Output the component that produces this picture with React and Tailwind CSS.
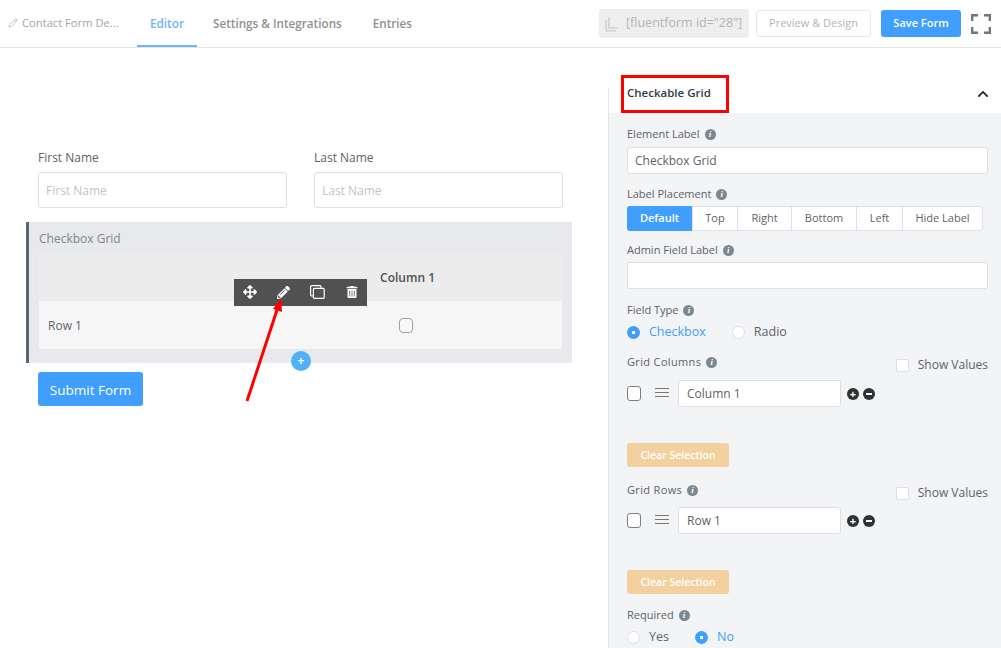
import { FaArrowsAlt, FaChevronUp, FaPencilAlt, FaTrashAlt } from "react-icons/fa"
import { Pencil } from "lucide-react"

const font = "font-['Open_Sans','Noto_Sans',sans-serif]"

function Info() {
  return (
    <span className="ml-[5px] inline-flex h-[11px] w-[11px] items-center justify-center rounded-full bg-[#7d8790] font-['Liberation_Serif',serif] text-[9px] font-bold italic leading-none text-white">
      i
    </span>
  )
}

function FieldLabel({ children, className = "" }) {
  return (
    <div className={`flex h-[18px] items-center text-[11px] text-[#606266] ${className}`}>
      {children}
      <Info />
    </div>
  )
}

function Radio({ label, on }) {
  return (
    <div className={`flex items-center text-[12.5px] ${on ? "font-medium text-[#409eff]" : "text-[#606266]"}`}>
      {on ? (
        <span className="flex h-[13px] w-[13px] items-center justify-center rounded-full bg-[#409eff]">
          <span className="h-[3px] w-[3px] bg-white" />
        </span>
      ) : (
        <span className="h-[13px] w-[13px] rounded-full border border-[#dcdfe6] bg-white" />
      )}
      <span className="ml-[9px]">{label}</span>
    </div>
  )
}

function ShowValues() {
  return (
    <div className="flex items-center text-[12px] text-[#606266]">
      <span className="h-[13px] w-[13px] rounded-[2px] border border-[#dcdfe6] bg-white" />
      <span className="ml-[9px]">Show Values</span>
    </div>
  )
}

function OptionRow({ value, width }) {
  return (
    <div className="flex items-center">
      <span className="h-[15px] w-[14px] rounded-[3px] border border-[#7a7f85] bg-white" />
      <span className="ml-[14px] mb-[3px] flex w-[14px] flex-col gap-[3px]">
        <span className="h-px bg-[#777]" />
        <span className="h-px bg-[#777]" />
        <span className="h-px bg-[#777]" />
      </span>
      <div style={{ width }} className="ml-[9px] flex h-[27px] items-center rounded-[3px] border border-[#dcdfe6] bg-white px-2 pt-px text-[12px] text-[#606266]">
        {value}
      </div>
      <span className="ml-[6px] flex h-[12px] w-[12px] items-center justify-center rounded-full bg-[#303133] text-[11px] font-bold leading-none text-white">+</span>
      <span className="ml-[4px] flex h-[12px] w-[12px] items-center justify-center rounded-full bg-[#303133]">
        <span className="h-[2px] w-[6px] bg-white" />
      </span>
    </div>
  )
}

function ClearButton({ className = "" }) {
  return (
    <div className={`flex h-[24px] w-[102px] items-center justify-center rounded-[3px] bg-[#f3d19e] pt-px text-[10.5px] font-semibold text-white ${className}`}>
      Clear Selection
    </div>
  )
}

const placements = [
  ["Default", "w-[65px]"],
  ["Top", "w-[45px]"],
  ["Right", "w-[54px]"],
  ["Bottom", "w-[65px]"],
  ["Left", "w-[46px]"],
  ["Hide Label", "flex-1"],
]

export default function App() {
  return (
    <div className={`relative h-[648px] w-[1001px] overflow-hidden bg-white ${font}`}>
      <header className="flex h-[48px] items-center border-b border-[#e4e4e4] pl-[8px]">
        <div className="flex w-[129px] items-center text-[11.2px] text-[#a5a5a5]">
          <Pencil className="h-[10px] w-[10px]" strokeWidth={1.5} />
          <span className="ml-[4px]">Contact Form De...</span>
        </div>
        <nav className="flex h-full text-[11.7px] font-semibold text-[#8f8f8f]">
          <span className="flex h-[47px] w-[60px] items-center justify-center border-b-2 border-[#6db3ff] pt-[3px] text-[#6db3ff]">Editor</span>
          <span className="ml-[16px] flex items-center pt-px">Settings &amp; Integrations</span>
          <span className="ml-[31px] flex items-center pt-px">Entries</span>
        </nav>
        <div className="ml-auto flex items-center pr-[10px]">
          <div className="flex h-[29px] w-[150px] items-center rounded-[3px] bg-[#eeeeee] pl-[6px] text-[12.5px] text-[#b4b4b4]">
            <svg width="15" height="16" viewBox="0 0 15 16" fill="none" stroke="#c8c8c8" strokeWidth="1.2">
              <path d="M1 4V15H11" />
              <path d="M4 1V12H13" />
            </svg>
            <span className="ml-[6px] whitespace-nowrap">[fluentform id="28"]</span>
          </div>
          <div className="ml-[7px] flex h-[27px] w-[115px] items-center justify-center rounded-[3px] border border-[#e6e6e6] text-[11px] text-[#b4b4b4]">
            Preview &amp; Design
          </div>
          <div className="ml-[10px] flex h-[27px] w-[80px] items-center justify-center rounded-[3px] bg-[#409eff] text-[11px] font-semibold text-white">
            Save Form
          </div>
          <svg className="ml-[10px]" width="20" height="20" viewBox="0 0 20 20" fill="none" stroke="#6f7780" strokeWidth="2.4">
            <path d="M1.2 7V1.2H7M13 1.2H18.8V7M1.2 13V18.8H7M13 18.8H18.8V13" />
          </svg>
        </div>
      </header>

      <div className="flex h-[600px]">
        <main className="w-[608px] pl-[26px] pr-[36px]">
          <div className="flex gap-[27px] pl-[12px] pr-[9px] pt-[100px]">
            {["First Name", "Last Name"].map((name) => (
              <div key={name} className="flex-1">
                <div className="pt-px text-[12px] leading-[17px] text-[#606266]">{name}</div>
                <div className="mt-[6px] flex h-[36px] items-center rounded-[3px] border border-[#dcdfe6] px-[7px] pt-px text-[12px] text-[#c0c4cc]">
                  {name}
                </div>
              </div>
            ))}
          </div>

          <section className="mt-[14px] h-[141px] border-l-[3px] border-[#5c666e] bg-[#e8e9ec] pl-[10px] pr-[10px] pt-[8px]">
            <div className="text-[12px] leading-[17px] text-[#80858a]">Checkbox Grid</div>
            <div className="mt-[6px] flex h-[48px] items-center justify-end bg-[#ececec] pr-[127px] pt-px text-[12px] font-semibold text-[#4f5358]">
              Column 1
            </div>
            <div className="flex h-[48px] items-center bg-[#f6f6f6] pl-[9px] pt-px text-[12px] text-[#606266]">
              <span>Row 1</span>
              <span className="ml-auto mr-[149px] h-[15px] w-[14px] rounded-[4px] border border-[#9a9fa5] bg-[#f8f8f8]" />
            </div>
          </section>

          <div className="ml-[12px] mt-[9px] flex h-[34px] w-[105px] items-center justify-center rounded-[3px] bg-[#409eff] pt-[2px] text-[13.5px] text-white">
            Submit Form
          </div>
        </main>

        <aside className="mt-[40px] flex-1 border-l border-[#e4e4e4]">
          <div className="flex h-[25px] items-start justify-between pl-[18px] pr-[12px] text-[11.5px] font-semibold leading-[10px] text-[#303a4d]">
            <span>Checkable Grid</span>
            <FaChevronUp className="h-[12px] w-[12px] text-[#2a3440]" />
          </div>
          <div className="h-[535px] bg-[#f3f4f6] pl-[18px] pr-[13px] pt-[12px]">
            <FieldLabel>Element Label</FieldLabel>
            <div className="mt-[4px] flex h-[27px] items-center rounded-[3px] border border-[#dcdfe6] bg-white px-[7px] text-[12px] text-[#606266]">
              Checkbox Grid
            </div>

            <FieldLabel className="mt-[11px]">Label Placement</FieldLabel>
            <div className="mt-[3px] flex h-[25px] w-[356px] rounded-[3px] border border-[#dcdfe6] bg-white text-[11px] text-[#606266]">
              {placements.map(([name, width], i) => (
                <span
                  key={name}
                  className={`flex items-center justify-center ${width} ${
                    i === 0 ? "-my-px -ml-px rounded-l-[3px] bg-[#409eff] font-semibold text-white" : "border-l border-[#dcdfe6]"
                  }`}
                >
                  {name}
                </span>
              ))}
            </div>

            <FieldLabel className="mt-[10px]">Admin Field Label</FieldLabel>
            <div className="mt-[3px] h-[27px] rounded-[3px] border border-[#dcdfe6] bg-white" />

            <FieldLabel className="mt-[12px]">Field Type</FieldLabel>
            <div className="mt-[3px] flex h-[20px] items-center gap-[26px]">
              <Radio label="Checkbox" on />
              <Radio label="Radio" />
            </div>

            <div className="mt-[11px] flex items-start justify-between">
              <FieldLabel className="tracking-[0.35px]">Grid Columns</FieldLabel>
              <div className="pt-[3px]"><ShowValues /></div>
            </div>
            <div className="mt-[6px]"><OptionRow value="Column 1" width={163} /></div>
            <ClearButton className="mt-[36px]" />

            <div className="mt-[14px] flex items-start justify-between">
              <FieldLabel className="tracking-[0.35px]">Grid Rows</FieldLabel>
              <div className="pt-[3px]"><ShowValues /></div>
            </div>
            <div className="mt-[5px]"><OptionRow value="Row 1" width={163} /></div>
            <ClearButton className="mt-[36px]" />

            <FieldLabel className="mt-[12px]">Required</FieldLabel>
            <div className="mt-[3px] flex h-[20px] items-center gap-[26px]">
              <Radio label="Yes" />
              <Radio label="No" on />
            </div>
          </div>
        </aside>
      </div>

      {/* hover toolbar on the grid field */}
      <div className="absolute left-[234px] top-[279px] flex h-[27px] w-[133px] items-center bg-[#515151] pb-px pl-[9px] text-white">
        <FaArrowsAlt className="h-[14px] w-[14px]" />
        <FaPencilAlt className="ml-[20px] h-[13px] w-[13px]" />
        <svg className="ml-[20px]" width="15" height="14" viewBox="0 0 15 14" fill="none" stroke="white" strokeWidth="1.2">
          <path d="M3 11H1.5A1 1 0 0 1 .6 10V1.6A1 1 0 0 1 1.6 .6H10A1 1 0 0 1 11 1.6V3" />
          <rect x="3.4" y="3.4" width="10.8" height="10" rx="1" />
        </svg>
        <FaTrashAlt className="ml-[21px] h-[12px] w-[12px]" />
      </div>

      <span className="absolute left-[291px] top-[351px] flex h-[20px] w-[20px] items-center justify-center rounded-full bg-[#4fb0f5] text-[12px] font-bold leading-none text-white">
        +
      </span>

      {/* annotation: arrow and red frame */}
      <svg className="absolute left-[240px] top-[290px]" width="50" height="118" viewBox="0 0 50 118">
        <path d="M7 111 L37 20" stroke="#ff0000" strokeWidth="3" fill="none" />
        <path d="M41 8 L33 19 L42 22 Z" fill="#ff0000" />
      </svg>
      <div className="absolute left-[621px] top-[75px] h-[38px] w-[108px] border-[3px] border-[#ff0000]" />
    </div>
  )
}
